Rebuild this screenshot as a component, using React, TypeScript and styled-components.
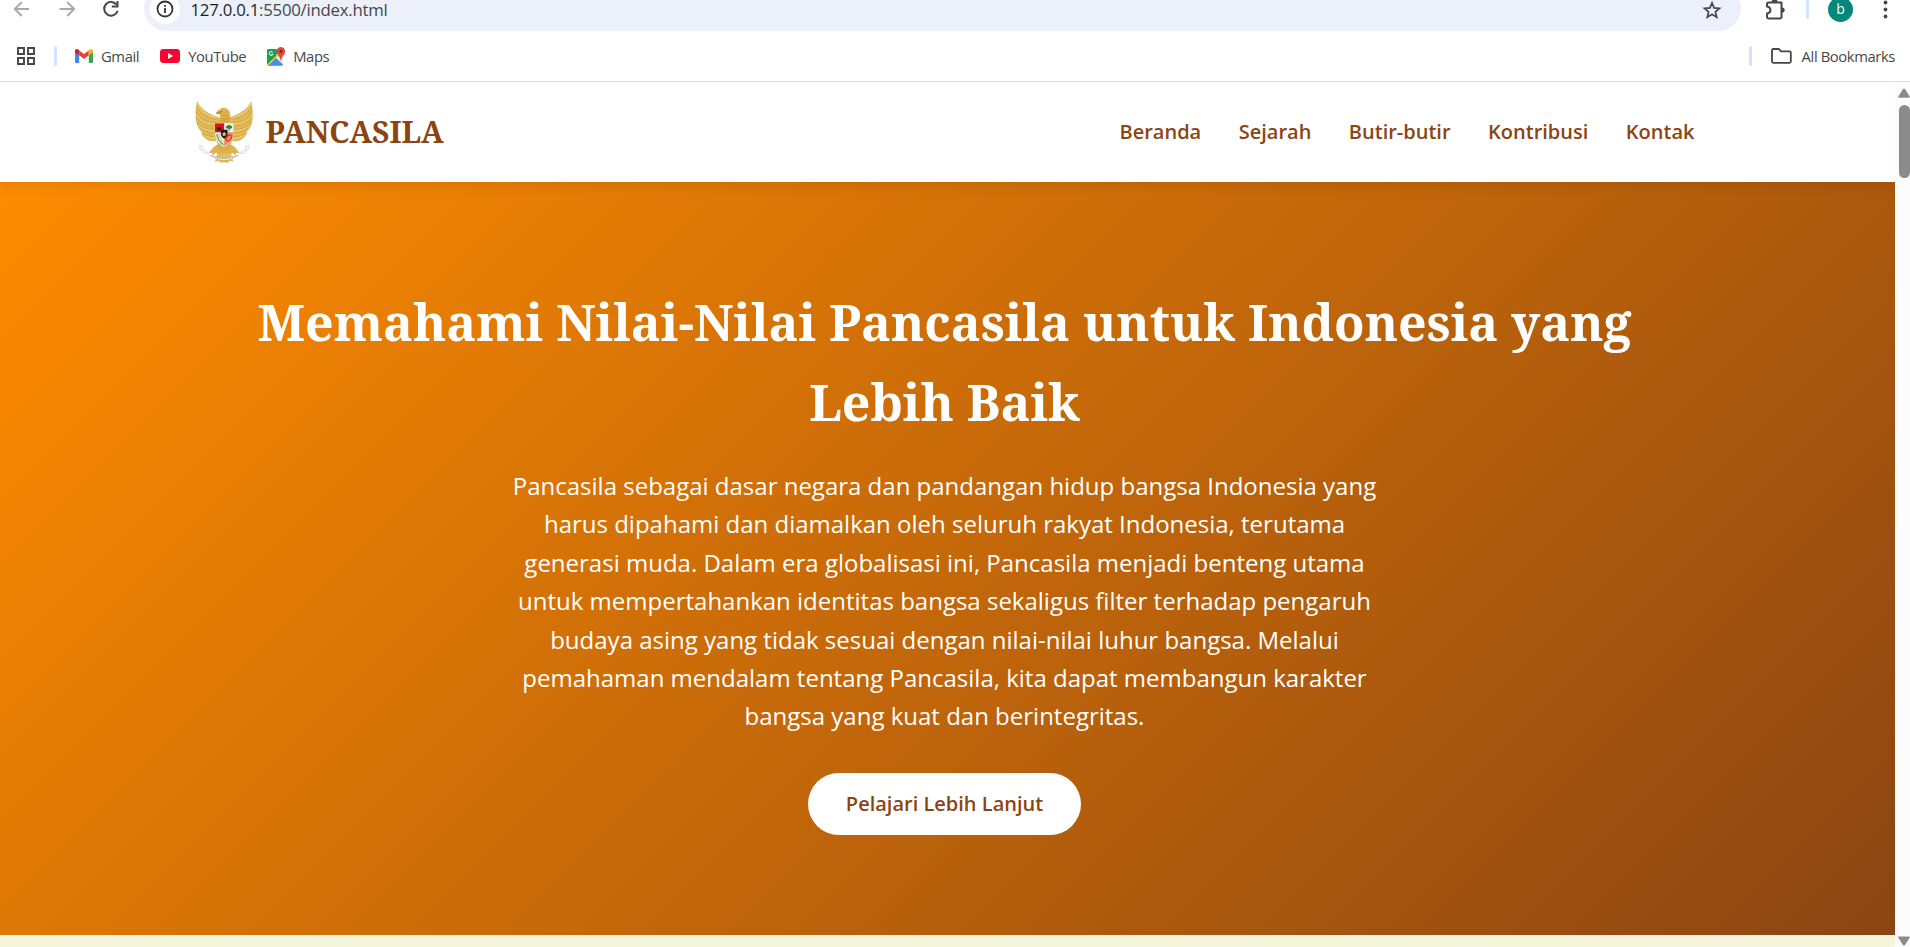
import React from 'react';
import styled, { createGlobalStyle } from 'styled-components';

const GlobalStyle = createGlobalStyle`
  *, *::before, *::after { box-sizing: border-box; }
  html, body { margin: 0; padding: 0; overflow: hidden; background: #fff; }
  svg { display: block; flex: none; }
`;

const Window = styled.div`
  display: flex;
  flex-direction: column;
  width: 1910px;
  height: 947px;
  overflow: hidden;
  font-family: 'Open Sans', sans-serif;
`;

/* ---------- browser chrome ---------- */

const Toolbar = styled.div`
  display: flex;
  align-items: flex-end;
  height: 31px;
  flex: none;
  overflow: hidden;
  color: #474747;
`;

const ToolbarInner = styled.div`
  display: flex;
  align-items: center;
  flex: 1;
  height: 45px;
  flex-shrink: 0;
  padding: 0 18px 0 12px;
`;

const NavButtons = styled.div`
  display: flex;
  align-items: center;
  gap: 24.5px;
  width: 132px;
`;

const Omnibox = styled.div`
  display: flex;
  align-items: center;
  width: 1597px;
  height: 45px;
  padding: 0 19px 0 6px;
  border-radius: 22.5px;
  background: #ebf0fa;
`;

const SiteInfo = styled.span`
  display: flex;
  align-items: center;
  justify-content: center;
  width: 30px;
  height: 30px;
  margin-top: 1px;
  border-radius: 50%;
  background: #fff;
`;

const Address = styled.span`
  flex: 1;
  margin: 3px 0 0 10.5px;
  font-size: 16.8px;
  line-height: 18px;
  letter-spacing: -0.25px;
  color: #474747;
`;

const Host = styled.span`
  color: #1f1f1f;
`;

const StarSlot = styled.span`
  margin-top: 2px;
`;

const ToolbarEnd = styled.div`
  display: flex;
  align-items: center;
  margin-left: 24px;
`;

const Divider = styled.span<{ $gap?: string }>`
  width: 3px;
  height: 20px;
  border-radius: 2px;
  background: #d3e3fd;
  margin: ${(p) => p.$gap ?? '0'};
`;

const Avatar = styled.span`
  display: flex;
  align-items: center;
  justify-content: center;
  width: 25px;
  height: 25px;
  margin: 1px 30px 0 0;
  border-radius: 50%;
  background: #00897b;
  color: #fff;
  font-size: 14px;
  line-height: 18px;
`;

const BookmarksBar = styled.div`
  display: flex;
  align-items: center;
  flex: none;
  height: 51px;
  padding: 0 15px 0 17px;
  border-bottom: 1px solid #dedfe0;
  color: #474747;
`;

const Bookmark = styled.span<{ $gap: number; $after?: number }>`
  display: flex;
  align-items: center;
  gap: ${(p) => p.$gap}px;
  margin-right: ${(p) => p.$after ?? 0}px;
`;

const BookmarkText = styled.span`
  font-size: 14.8px;
  line-height: 20px;
  letter-spacing: -0.4px;
  white-space: nowrap;
`;

const Spacer = styled.span`
  flex: 1;
`;

/* ---------- viewport and scrollbar ---------- */

const Viewport = styled.div`
  display: flex;
  flex: 1;
  min-height: 0;
`;

const Page = styled.div`
  width: 1901px;
  margin-left: -6px;
  flex: none;
  overflow: hidden;
  background: #f5f5dc;
`;

const Scrollbar = styled.div`
  display: flex;
  flex-direction: column;
  justify-content: space-between;
  width: 15px;
  padding: 6px 0 1px 3px;
  background: #fcfcfc;
`;

const ScrollTop = styled.div`
  display: flex;
  flex-direction: column;
  gap: 7px;
`;

const Thumb = styled.span`
  width: 11px;
  height: 73px;
  margin-left: 1px;
  border-radius: 5.5px;
  background: #8b8b8b;
`;

/* ---------- site ---------- */

const Header = styled.header`
  position: relative;
  z-index: 1;
  background: #fff;
  box-shadow: 0 2.5px 12.5px rgba(0, 0, 0, 0.1);
`;

const HeaderInner = styled.div`
  display: flex;
  align-items: center;
  justify-content: space-between;
  width: 1500px;
  height: 100px;
  margin: 0 auto;
`;

const Brand = styled.div`
  display: flex;
  align-items: center;
  gap: 12.5px;
  font: bold 30px/48px 'Noto Serif', serif;
  color: #8b4513;
`;

const Menu = styled.nav`
  display: flex;
  gap: 37.5px;
`;

const MenuLink = styled.a`
  font-size: 20px;
  font-weight: 600;
  line-height: 32px;
  color: #8b4513;
`;

const Hero = styled.section`
  display: flex;
  flex-direction: column;
  align-items: center;
  padding: 100px 0;
  text-align: center;
  color: #fff;
  background: linear-gradient(135deg, #ff8c00, #8b4513);
`;

const HeroTitle = styled.h1`
  width: 1500px;
  margin: 0 0 25px;
  font: bold 50px/80px 'Noto Serif', serif;
`;

const HeroText = styled.p`
  width: 875px;
  margin: 0 0 37.5px;
  font-size: 24px;
  line-height: 38.4px;
`;

const HeroButton = styled.a`
  padding: 15px 37.5px;
  border-radius: 37.5px;
  background: #fff;
  color: #8b4513;
  font-size: 20px;
  font-weight: 600;
  line-height: 32px;
`;

/* ---------- icons ---------- */

const ArrowIcon = ({ flip }: { flip?: boolean }) => (
  <svg width="20" height="20" viewBox="0 0 20 20" fill="none" stroke="#a9a9a9" strokeWidth="1.9">
    <path d={flip ? 'M2.5 10H17M10.2 3l7 7-7 7' : 'M17 10H3M9.8 3l-7 7 7 7'} />
  </svg>
);

const ReloadIcon = () => (
  <svg width="20" height="20" viewBox="0 0 20 20" fill="none" stroke="#474747" strokeWidth="2">
    <path d="M15.6 5.6A6.9 6.9 0 1 0 16.7 11.8" />
    <path d="M16.5 2v5.6h-5.7" />
  </svg>
);

const InfoIcon = () => (
  <svg width="18" height="18" viewBox="0 0 18 18" fill="none" stroke="#333" strokeWidth="1.8">
    <circle cx="9" cy="9" r="7.5" />
    <path d="M9 8v5M9 5v1.8" />
  </svg>
);

const StarIcon = () => (
  <svg width="20" height="20" viewBox="0 0 20 20" fill="none" stroke="#474747" strokeWidth="1.7">
    <path d="M10 2.9l2.1 5 5.4.5-4.1 3.5 1.3 5.3-4.700-2.9-4.700 2.900 1.300-5.300-4.100-3.500 5.400-.5z" />
  </svg>
);

const ExtensionIcon = () => (
  <svg width="22" height="24" viewBox="0 0 22 24">
    <path
      d="M3.5 5.500h13v14.600q0 1.400-1.400 1.400H3.400q-1.400 0-1.400-1.400v-3.600c4.600-.6 4.600-6.400 0-7V6.900Q2 5.500 3.500 5.500z"
      fill="none"
      stroke="#474747"
      strokeWidth="2"
      strokeLinejoin="round"
    />
    <path d="M6.700 5a2.900 2.900 0 0 1 5.800 0zM17 10.400a2.700 2.700 0 0 1 0 5.400z" fill="#474747" />
  </svg>
);

const DotsIcon = () => (
  <svg width="5" height="20" viewBox="0 0 5 20" fill="#474747">
    <circle cx="2.5" cy="3.5" r="1.9" />
    <circle cx="2.5" cy="10.500" r="1.9" />
    <circle cx="2.5" cy="17.500" r="1.9" />
  </svg>
);

const GridIcon = () => (
  <svg width="18" height="18" viewBox="0 0 18 18" fill="none" stroke="#474747" strokeWidth="1.9">
    <path d="M1 1h6v6H1zM11 1h6v6h-6zM1 11h6v6H1zM11 11h6v6h-6z" />
  </svg>
);

const GmailIcon = () => (
  <svg width="18" height="14" viewBox="0 0 18 14">
    <path d="M0 2.5l4.2 3V14H1.3Q0 14 0 12.7z" fill="#4285f4" />
    <path d="M18 2.5l-4.2 3V14h2.9q1.3 0 1.3-1.3z" fill="#34a853" />
    <path d="M4.2 1.4L9 5l4.8-3.6v4.9L9 9.9 4.2 6.3z" fill="#ea4335" />
    <path d="M0 3.2V2C0 .2 2-.5 3.3.6l.9.8v4.9z" fill="#c5221f" />
    <path d="M18 3.2V2c0-1.8-2-2.5-3.3-1.4l-.9.8v4.9z" fill="#fbbc04" />
  </svg>
);

const YouTubeIcon = () => (
  <svg width="20" height="14" viewBox="0 0 20 14">
    <rect width="20" height="14" rx="3.4" fill="#ff0033" />
    <path d="M8 4l5.2 3L8 10z" fill="#fff" />
  </svg>
);

const MapsIcon = () => (
  <svg width="18" height="19" viewBox="0 0 18 19">
    <rect x="0" y="2" width="16" height="16.4" rx="1.4" fill="#1e9e58" />
    <path d="M8.2 10.4L16 17.7V6.5L12.5 5z" fill="#e6e6e6" />
    <path d="M8.2 10.4l7.7 8H.8z" fill="#4a8af4" />
    <path d="M0 16.8L11.8 5l1.4 1.6L1.6 18.3Q.2 18.3 0 16.8z" fill="#fcd04b" />
    <path d="M0 15.4L8.3 7.3 9.5 8.4 .3 17.4z" fill="#1e9e58" />
    <path d="M5.6 5.2A2 2 0 1 0 6 7.2H4.2" fill="none" stroke="#fff" strokeWidth="1" />
    <path d="M13.9 0a4.2 4.2 0 0 1 4.2 4.2c0 3.8-3.5 5-4.2 9.8-.7-4.8-4.2-6-4.2-9.8A4.2 4.2 0 0 1 13.9 0z" fill="#de4b3c" />
    <circle cx="13.9" cy="4.3" r="1.5" fill="#7c2a22" />
  </svg>
);

const FolderIcon = () => (
  <svg width="21" height="16" viewBox="0 0 21 16" fill="none" stroke="#474747" strokeWidth="1.8">
    <path d="M2.2 1h5.6l2.2 2.3h8.6q1.2 0 1.2 1.2v9.1q0 1.2-1.2 1.2H2.2Q1 14.8 1 13.6V2.2Q1 1 2.2 1z" />
  </svg>
);

const ScrollArrow = ({ down }: { down?: boolean }) => (
  <svg width="12" height="10" viewBox="0 0 12 10" fill="#8b8b8b">
    <path d={down ? 'M.3 1.8Q0 .5 1.2.5h9.6q1.2 0 .9 1.3L7 9Q6 10.2 5 9z' : 'M.3 8.5Q0 9.8 1.2 9.8h9.6q1.2 0 .9-1.3L7 1Q6-.2 5 1z'} />
  </svg>
);

const leftWing =
  'M20 17C15 34 14 62 17 80C19 92 25 102 33 109C32 117 37 124 44 128C50 136 62 140 74 137L92 132L90 70L80 64C64 60 48 50 38 42C30 35 24 27 20 17Z';

const Garuda = () => (
  <svg width="58.5" height="62.5" viewBox="13.5 17 175.5 187.5">
    <g id="wing">
      <path d={leftWing} fill="#e0ba58" />
      <g fill="none" stroke="#b88a2c" strokeWidth="1.6" opacity="0.7">
        <path d="M19 32C27 56 48 68 78 72M17 48C25 72 50 80 80 82M17 64C28 86 54 92 82 92M22 82C36 100 58 102 84 103M30 98C46 112 64 112 86 112M40 114C52 125 70 124 88 121" />
      </g>
      <g fill="none" stroke="#f6e09a" strokeWidth="2.2" opacity="0.9">
        <path d="M19 24C28 48 50 62 76 67M17 56C27 80 52 86 80 87M25 90C42 106 60 108 84 108M46 121C58 130 74 130 88 127" />
      </g>
    </g>
    <use href="#wing" transform="matrix(-1 0 0 1 202 0)" />
    <path d="M84 146L70 154L62 164L54 174L64 172L68 180L76 172L84 178H118L126 172L134 180L138 172L148 174L140 164L132 154L118 146Z" fill="#dcb453" />
    <path d="M80 176L73 199L84 197L92 203L101 200L110 203L118 197L129 199L122 176Z" fill="#e3c068" />
    <path d="M84 186L81 196M93 188v12M101 188v11M109 188v12M118 186l3 10" stroke="#b58a31" strokeWidth="1.5" />
    <path d="M78 134C82 152 88 166 101 174C114 166 120 152 124 134Z" fill="#dfb44d" />
    <path d="M82 150h38M87 158h28M92 165h18" stroke="#c4973a" strokeWidth="2" strokeDasharray="4 2" />
    <path d="M82 84C86 70 90 62 88 57L76 54C80 46 88 43 92 39C100 34 110 39 115 45C121 56 120 74 122 86Z" fill="#ddb24a" />
    <path d="M76 54L84 48L92 54L84 57Z" fill="#c08f2d" />
    <path d="M98 60l14 2M94 70l20 2M92 77l24 1" stroke="#b88b33" strokeWidth="1.8" />
    <circle cx="93" cy="49" r="2" fill="#725019" />
    <path d="M73 83H129V112C129 132 117 146 101 154C84 146 73 132 73 112Z" fill="#f6f4ed" stroke="#e4c779" strokeWidth="1.5" />
    <path d="M73.500 84H101V111H73.500Z" fill="#dc151b" />
    <path d="M101 111H128.500C128.500 130 116 145 101 153Z" fill="#ee8a68" />
    <path d="M80 102L77 95L84 97L91 94L94 101L88 104L90 108L84 105L78 106Z" fill="#3a2020" />
    <path d="M107 99a5 5 0 0 1 3-8 7 7 0 0 1 11 0 5 5 0 0 1 3 8q-8 3-17 0z" fill="#238655" />
    <path d="M116 98v9" stroke="#6d5634" strokeWidth="2.5" />
    <path d="M79 116C81 132 88 141 99 148" fill="none" stroke="#49a26c" strokeWidth="4" />
    <path d="M86 116C87 130 92 136 99 140" fill="none" stroke="#e1c574" strokeWidth="4" />
    <ellipse cx="115" cy="128" rx="7" ry="10" transform="rotate(35 115 128)" fill="none" stroke="#df3a1e" strokeWidth="4" />
    <path d="M91 103H111V118Q109 126 101 130Q93 126 91 118Z" fill="#17130f" />
    <path d="M101 108l2.200 5.700 6 .3-4.700 3.800 1.600 5.800-5.100-3.300-5.100 3.300 1.600-5.800-4.700-3.800 6-.3z" fill="#ecc766" />
    <path d="M59 176C84 192 118 192 143 176L144 182C118 198 84 198 58 182Z" fill="#f0eee6" />
    <path d="M61 180C84 192 118 192 141 180" fill="none" stroke="#9a9484" strokeWidth="3.500" strokeDasharray="3 2" />
    <path d="M28 150L38 154L34 161L46 165L54 175L44 174L32 165L27 158ZM174 150L164 154L168 161L156 165L148 175L158 174L170 165L175 158Z" fill="#f7f8f7" stroke="#b9bcbb" strokeWidth="1.400" />
  </svg>
);

const menu = ['Beranda', 'Sejarah', 'Butir-butir', 'Kontribusi', 'Kontak'];

export default function App() {
  return (
    <Window>
      <GlobalStyle />
      <Toolbar>
        <ToolbarInner>
          <NavButtons>
            <ArrowIcon />
            <ArrowIcon flip />
            <ReloadIcon />
          </NavButtons>
          <Omnibox>
            <SiteInfo>
              <InfoIcon />
            </SiteInfo>
            <Address>
              <Host>127.0.0.1</Host>:5500/index.html
            </Address>
            <StarSlot>
              <StarIcon />
            </StarSlot>
          </Omnibox>
          <ToolbarEnd>
            <ExtensionIcon />
            <Divider $gap="0 19px 0 19px" />
            <Avatar>b</Avatar>
            <DotsIcon />
          </ToolbarEnd>
        </ToolbarInner>
      </Toolbar>
      <BookmarksBar>
        <GridIcon />
        <Divider $gap="0 18px 0 19px" />
        <Bookmark $gap={8} $after={21}>
          <GmailIcon />
          <BookmarkText>Gmail</BookmarkText>
        </Bookmark>
        <Bookmark $gap={8} $after={21}>
          <YouTubeIcon />
          <BookmarkText>YouTube</BookmarkText>
        </Bookmark>
        <Bookmark $gap={8}>
          <MapsIcon />
          <BookmarkText>Maps</BookmarkText>
        </Bookmark>
        <Spacer />
        <Divider $gap="0 19px 0 0" />
        <Bookmark $gap={10}>
          <FolderIcon />
          <BookmarkText>All Bookmarks</BookmarkText>
        </Bookmark>
      </BookmarksBar>
      <Viewport>
        <Page>
          <Header>
            <HeaderInner>
              <Brand>
                <Garuda />
                PANCASILA
              </Brand>
              <Menu>
                {menu.map((label) => (
                  <MenuLink key={label}>{label}</MenuLink>
                ))}
              </Menu>
            </HeaderInner>
          </Header>
          <Hero>
            <HeroTitle>Memahami Nilai-Nilai Pancasila untuk Indonesia yang Lebih Baik</HeroTitle>
            <HeroText>
              Pancasila sebagai dasar negara dan pandangan hidup bangsa Indonesia yang harus dipahami dan
              diamalkan oleh seluruh rakyat Indonesia, terutama generasi muda. Dalam era globalisasi ini,
              Pancasila menjadi benteng utama untuk mempertahankan identitas bangsa sekaligus filter terhadap
              pengaruh budaya asing yang tidak sesuai dengan nilai-nilai luhur bangsa. Melalui pemahaman
              mendalam tentang Pancasila, kita dapat membangun karakter bangsa yang kuat dan berintegritas.
            </HeroText>
            <HeroButton>Pelajari Lebih Lanjut</HeroButton>
          </Hero>
        </Page>
        <Scrollbar>
          <ScrollTop>
            <ScrollArrow />
            <Thumb />
          </ScrollTop>
          <ScrollArrow down />
        </Scrollbar>
      </Viewport>
    </Window>
  );
}
